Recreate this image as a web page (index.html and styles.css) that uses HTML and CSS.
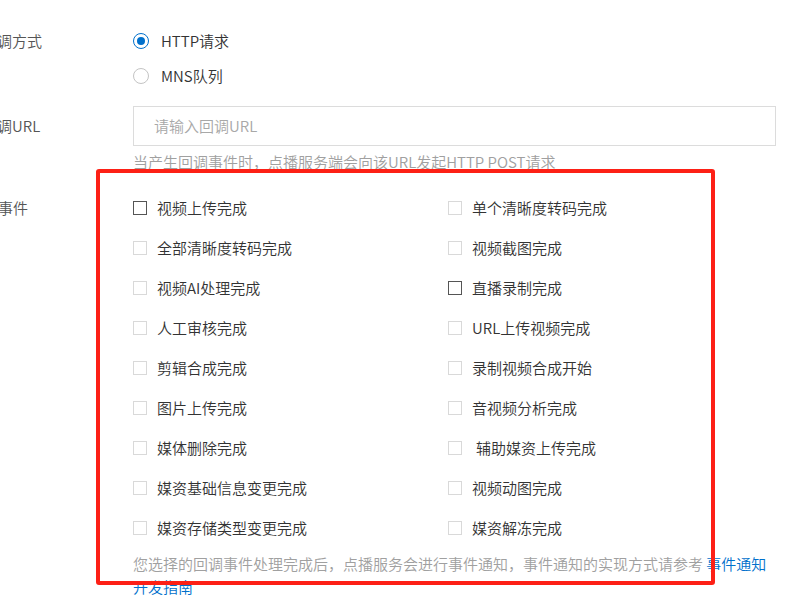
FILE: index.html
```html
<!DOCTYPE html>
<html lang="zh-CN">
<head>
<meta charset="utf-8">
<title>回调设置</title>
<link rel="stylesheet" href="styles.css">
</head>
<body>
<div class="page">
  <div class="form">
    <div class="row row-method">
      <div class="label">回调方式</div>
      <div class="content">
        <div class="radio-item"><span class="radio checked"></span><span class="opt">HTTP请求</span></div>
        <div class="radio-item"><span class="radio"></span><span class="opt">MNS队列</span></div>
      </div>
    </div>
    <div class="row row-url">
      <div class="label label-url">回调URL</div>
      <div class="content">
        <div class="input">请输入回调URL</div>
        <div class="help help-url">当产生回调事件时，点播服务端会向该URL发起HTTP POST请求</div>
      </div>
    </div>
    <div class="row row-events">
      <div class="label label-events"><span class="shift">回调事件</span></div>
      <div class="content">
        <div class="grid">
          <div class="cb-item"><span class="cb dark"></span><span class="opt">视频上传完成</span></div>
          <div class="cb-item"><span class="cb"></span><span class="opt">单个清晰度转码完成</span></div>
          <div class="cb-item"><span class="cb"></span><span class="opt">全部清晰度转码完成</span></div>
          <div class="cb-item"><span class="cb"></span><span class="opt">视频截图完成</span></div>
          <div class="cb-item"><span class="cb"></span><span class="opt">视频AI处理完成</span></div>
          <div class="cb-item"><span class="cb dark"></span><span class="opt">直播录制完成</span></div>
          <div class="cb-item"><span class="cb"></span><span class="opt">人工审核完成</span></div>
          <div class="cb-item"><span class="cb"></span><span class="opt">URL上传视频完成</span></div>
          <div class="cb-item"><span class="cb"></span><span class="opt">剪辑合成完成</span></div>
          <div class="cb-item"><span class="cb"></span><span class="opt">录制视频合成开始</span></div>
          <div class="cb-item"><span class="cb"></span><span class="opt">图片上传完成</span></div>
          <div class="cb-item"><span class="cb"></span><span class="opt">音视频分析完成</span></div>
          <div class="cb-item"><span class="cb"></span><span class="opt">媒体删除完成</span></div>
          <div class="cb-item"><span class="cb"></span><span class="opt opt-space">辅助媒资上传完成</span></div>
          <div class="cb-item"><span class="cb"></span><span class="opt">媒资基础信息变更完成</span></div>
          <div class="cb-item"><span class="cb"></span><span class="opt">视频动图完成</span></div>
          <div class="cb-item"><span class="cb"></span><span class="opt">媒资存储类型变更完成</span></div>
          <div class="cb-item"><span class="cb"></span><span class="opt">媒资解冻完成</span></div>
        </div>
        <div class="help help-events">您选择的回调事件处理完成后，点播服务会进行事件通知，事件通知的实现方式请参考 <a class="link" href="#">事件通知开发指南</a></div>
      </div>
    </div>
  </div>
  <div class="highlight"></div>
</div>
</body>
</html>
```

FILE: styles.css
```css
html, body {
  margin: 0;
  padding: 0;
  background: #ffffff;
}

body {
  font-family: "Noto Sans CJK SC", "Noto Sans", sans-serif;
  font-size: 15px;
  font-weight: 350;
  color: #333333;
  overflow: hidden;
}

.page {
  position: relative;
  width: 805px;
  height: 616px;
  overflow: hidden;
}

.form {
  margin-left: -18px;
  padding-top: 23px;
  display: flex;
  flex-direction: column;
}

.row {
  display: flex;
}

.label {
  width: 151px;
  flex: none;
  color: #555555;
  line-height: 35px;
  white-space: nowrap;
}

.content {
  width: 643px;
  display: flex;
  flex-direction: column;
}

.radio-item {
  height: 35px;
  display: flex;
  align-items: center;
}

.radio {
  width: 16px;
  height: 16px;
  box-sizing: border-box;
  border: 1px solid #c4c4c4;
  border-radius: 50%;
  background: #ffffff;
  margin-right: 12px;
  position: relative;
  flex: none;
}

.radio.checked {
  border-color: #0070cc;
}

.radio.checked::after {
  content: "";
  position: absolute;
  left: 3px;
  top: 3px;
  width: 8px;
  height: 8px;
  border-radius: 50%;
  background: #0070cc;
}

.opt {
  color: #333333;
  white-space: nowrap;
  line-height: 22px;
}

.row-url {
  margin-top: 13px;
}

.label-url {
  line-height: 40px;
}

.input {
  height: 40px;
  box-sizing: border-box;
  border: 1px solid #dcdcdc;
  padding: 0 20px;
  line-height: 38px;
  color: #a8a8a8;
}

.help {
  color: #a0a0a0;
  line-height: 23px;
}

.help-url {
  margin-top: 5px;
  line-height: 22px;
}

.row-events {
  margin-top: 15px;
}

.label-events {
  line-height: 40px;
}

.shift {
  margin-left: -14px;
}

.grid {
  display: grid;
  grid-template-columns: 315px 1fr;
  grid-auto-rows: 40px;
}

.cb-item {
  display: flex;
  align-items: center;
}

.cb {
  width: 14px;
  height: 14px;
  box-sizing: border-box;
  border: 1px solid #d9d9d9;
  background: #ffffff;
  margin-right: 10px;
  flex: none;
}

.cb.dark {
  border-color: #555555;
}

.opt-space {
  padding-left: 4px;
}

.help-events {
  margin-top: 4px;
}

.link {
  color: #0070cc;
  text-decoration: none;
}

.highlight {
  position: absolute;
  left: 96px;
  top: 169px;
  width: 619px;
  height: 416px;
  box-sizing: border-box;
  border: 4px solid #fd2016;
  border-radius: 3px;
  pointer-events: none;
}
```
